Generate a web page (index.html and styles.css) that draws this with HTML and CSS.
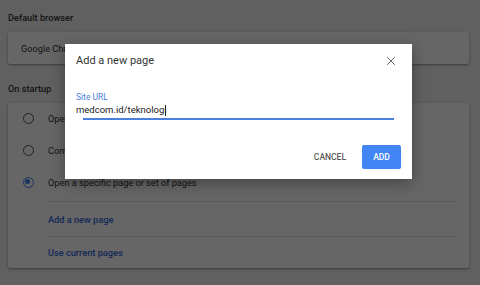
FILE: index.html
```html
<!DOCTYPE html>
<html>
<head>
<meta charset="utf-8">
<link rel="stylesheet" href="styles.css">
</head>
<body>
<div class="page">
  <h2 class="section-title first">Default browser</h2>
  <div class="card card-browser">
    <span class="browser-name">Google Chrome is your default browser</span>
  </div>
  <h2 class="section-title">On startup</h2>
  <div class="card card-startup">
    <div class="radio-row"><span class="radio"></span><span class="radio-label">Open the New Tab page</span></div>
    <div class="radio-row"><span class="radio"></span><span class="radio-label">Continue where you left off</span></div>
    <div class="radio-row"><span class="radio checked"></span><span class="radio-label">Open a specific page or set of pages</span></div>
    <div class="spacer"></div>
    <div class="link-row"><span class="link">Add a new page</span></div>
    <div class="link-row last"><span class="link">Use current pages</span></div>
  </div>
</div>
<div class="scrim"></div>
<div class="dialog">
  <div class="dialog-head">
    <span class="dialog-title">Add a new page</span>
    <svg class="close" width="10" height="10" viewBox="0 0 10 10"><path d="M1.2 1.2 L8.8 8.8 M8.8 1.2 L1.2 8.8" stroke="#666" stroke-width="1" fill="none"/></svg>
  </div>
  <div class="field">
    <label class="field-label">Site URL</label>
    <div class="field-input"><span>medcom.id/teknologi</span><span class="caret"></span></div>
    <div class="field-line"></div>
  </div>
  <div class="actions">
    <button class="btn cancel">CANCEL</button>
    <button class="btn add">ADD</button>
  </div>
</div>
</body>
</html>
```
FILE: styles.css
```css
html, body {
  margin: 0;
  padding: 0;
  width: 480px;
  height: 285px;
  overflow: hidden;
  background: #f1f1f1;
  font-family: Roboto, "Liberation Sans", sans-serif;
  color: #333;
}
.page {
  width: 461px;
  padding-left: 8px;
}
.section-title {
  margin: 0;
  font-size: 9.2px;
  font-weight: 500;
  line-height: 13px;
  color: #333;
  padding-top: 18px;
  height: 13px;
  padding-bottom: 8px;
}
.section-title.first {
  padding-top: 11px;
  padding-bottom: 8px;
}
.card {
  background: #fff;
  box-shadow: 0 1px 2px rgba(0,0,0,0.3), 0 1px 4px rgba(0,0,0,0.12);
  border-radius: 2px;
}
.card-browser {
  height: 32px;
  display: flex;
  align-items: center;
  padding-left: 13px;
  box-sizing: border-box;
  font-size: 9.2px;
}
.card-startup {
  height: 165px;
  display: flex;
  flex-direction: column;
}
.radio-row {
  height: 32px;
  display: flex;
  align-items: center;
  font-size: 9.2px;
}
.radio-row:first-child {
  margin-top: -1px;
}
.radio {
  width: 11px;
  height: 11px;
  border: 1.4px solid #555;
  border-radius: 50%;
  box-sizing: border-box;
  margin-left: 14.5px;
  margin-right: 14.5px;
  position: relative;
}
.radio.checked {
  border-color: #4285f4;
}
.radio.checked::after {
  content: "";
  position: absolute;
  left: 1.6px;
  top: 1.6px;
  width: 5px;
  height: 5px;
  border-radius: 50%;
  background: #4285f4;
}
.spacer {
  height: 3px;
}
.link-row {
  margin-left: 40px;
  margin-right: 13px;
  border-top: 1px solid #e0e0e0;
  height: 34px;
  display: flex;
  align-items: center;
  font-size: 9.2px;
  font-weight: 500;
  color: #3367d6;
}
.link-row.last {
  height: 31px;
}
.scrim {
  position: absolute;
  left: 0;
  top: 0;
  width: 480px;
  height: 285px;
  background: rgba(0,0,0,0.6);
}
.dialog {
  position: absolute;
  left: 65px;
  top: 44px;
  width: 347px;
  height: 135px;
  background: #fff;
  box-shadow: 0 4px 14px rgba(0,0,0,0.35);
  display: flex;
  flex-direction: column;
  box-sizing: border-box;
  padding: 0 11px;
}
.dialog-head {
  height: 31px;
  display: flex;
  align-items: center;
  justify-content: space-between;
  padding-top: 1px;
}
.dialog-title {
  font-size: 11px;
  color: #333;
}
.close {
  margin-right: 5px;
}
.field {
  margin-top: 15px;
  display: flex;
  flex-direction: column;
}
.field-label {
  font-size: 8.5px;
  color: #4a7fdc;
  line-height: 12px;
}
.field-input {
  font-size: 9.5px;
  line-height: 14px;
  color: #222;
  display: flex;
  align-items: center;
}
.caret {
  display: inline-block;
  width: 1px;
  height: 11px;
  background: #222;
  margin-left: -2px;
}
.field-line {
  height: 2px;
  background: #4a7fdc;
  margin-left: 7px;
  margin-right: 7px;
  margin-top: 1px;
}
.actions {
  display: flex;
  justify-content: flex-end;
  align-items: center;
  margin-top: 25px;
  gap: 16px;
}
.btn {
  font-family: Roboto, "Liberation Sans", sans-serif;
  font-size: 8.5px;
  font-weight: 500;
  border: none;
  background: none;
  padding: 0;
  height: 24px;
  border-radius: 2px;
}
.cancel {
  color: #5a5a5a;
}
.add {
  width: 39px;
  background: #4285f4;
  color: #fff;
}
```
